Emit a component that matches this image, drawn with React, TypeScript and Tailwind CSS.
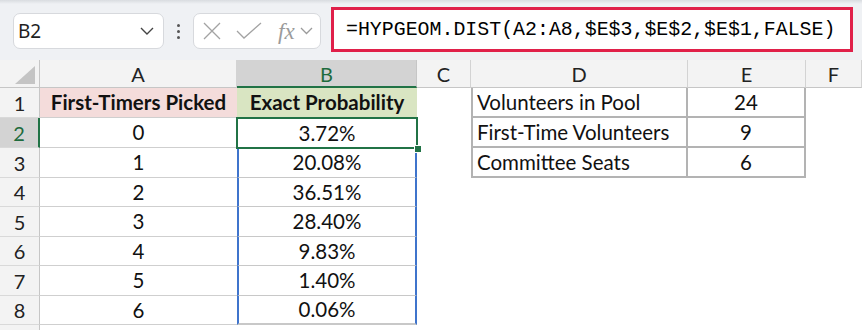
import React from "react";

const rows = [
  { n: 1, a: "First-Timers Picked", b: "Exact Probability", d: "Volunteers in Pool", e: "24", h: "h-[30px]" },
  { n: 2, a: "0", b: "3.72%", d: "First-Time Volunteers", e: "9", h: "h-[30px]" },
  { n: 3, a: "1", b: "20.08%", d: "Committee Seats", e: "6", h: "h-[30px]" },
  { n: 4, a: "2", b: "36.51%", d: "", e: "", h: "h-[29px]" },
  { n: 5, a: "3", b: "28.40%", d: "", e: "", h: "h-[30px]" },
  { n: 6, a: "4", b: "9.83%", d: "", e: "", h: "h-[29px]" },
  { n: 7, a: "5", b: "1.40%", d: "", e: "", h: "h-[30px]" },
  { n: 8, a: "6", b: "0.06%", d: "", e: "", h: "h-[29px]" },
];

function Toolbar() {
  return (
    <div className="relative h-[60px] bg-[#eff1f4] font-['Noto_Sans',sans-serif]">
      <div className="absolute left-0 right-0 top-0 h-[4px] bg-gradient-to-b from-[#d9dce0] to-[#eff1f4]" />
      <div className="flex items-start pt-[13px]">
        {/* name box */}
        <div className="ml-[13px] flex h-[36px] w-[151px] items-center justify-between rounded-[7px] border border-[#d7d9dd] bg-white pl-[4px] pr-[9px]">
          <span className="text-[19px] text-[#1f1f1f]">B2</span>
          <svg width="14" height="8" viewBox="0 0 14 8">
            <path d="M1 1l6 6 6-6" fill="none" stroke="#444" strokeWidth="1.4" />
          </svg>
        </div>
        {/* dots */}
        <div className="ml-[13px] mt-[11px] flex flex-col gap-[3px]">
          <span className="h-[3px] w-[3px] rounded-full bg-[#555]" />
          <span className="h-[3px] w-[3px] rounded-full bg-[#555]" />
          <span className="h-[3px] w-[3px] rounded-full bg-[#555]" />
        </div>
        {/* formula buttons */}
        <div className="ml-[13px] flex h-[36px] w-[128px] items-center rounded-[7px] border border-[#d7d9dd] bg-white pl-[9px]">
          <svg width="18" height="18" viewBox="0 0 18 18">
            <path d="M1 1l16 16M17 1L1 17" stroke="#a3a3a3" strokeWidth="1.3" />
          </svg>
          <svg className="ml-[15px]" width="26" height="18" viewBox="0 0 26 18">
            <path d="M1 9l7 7L25 1" fill="none" stroke="#a3a3a3" strokeWidth="1.3" />
          </svg>
          <span className="ml-[16px] font-['Liberation_Serif',serif] text-[23px] italic leading-none text-[#9b9b9b]">fx</span>
          <svg className="ml-[5px]" width="13" height="8" viewBox="0 0 13 8">
            <path d="M1 1l5.5 5.5L12 1" fill="none" stroke="#9b9b9b" strokeWidth="1.3" />
          </svg>
        </div>
        {/* formula bar */}
        <div className="-mt-[6px] ml-[10px] flex h-[45px] w-[522px] items-center border-[3px] border-[#e0204a] bg-white pl-[12px]">
          <span className="font-['Liberation_Mono',monospace] text-[19.9px] text-black">
            =HYPGEOM.DIST(A2:A8,$E$3,$E$2,$E$1,FALSE)
          </span>
        </div>
      </div>
    </div>
  );
}

function ColumnHeaders() {
  const cols = [
    { l: "A", w: "w-[197px]" },
    { l: "B", w: "w-[180px]" },
    { l: "C", w: "w-[54px]" },
    { l: "D", w: "w-[217px]" },
    { l: "E", w: "w-[118px]" },
    { l: "F", w: "w-[56px]" },
  ];
  return (
    <div className="flex h-[28px] bg-[#f3f3f3] text-[20px] text-[#222]">
      <div className="relative w-[40px] border-r border-b border-[#c6c6c6]">
        <svg className="absolute bottom-[3px] right-[4px]" width="20" height="18" viewBox="0 0 20 18">
          <polygon points="20,0 20,18 0,18" fill="#c4c4c4" />
        </svg>
      </div>
      {cols.map((c) =>
        c.l === "B" ? (
          <div
            key={c.l}
            className={`${c.w} flex items-center justify-center border-b-2 border-r border-b-[#217346] border-r-[#c6c6c6] bg-[#d3d3d3] pt-[2px] text-[#1e6b3d]`}
          >
            {c.l}
          </div>
        ) : (
          <div
            key={c.l}
            className={`${c.w} flex items-center justify-center border-r border-b border-[#d3d3d3] border-b-[#c6c6c6] pt-[1px]`}
          >
            {c.l}
          </div>
        )
      )}
    </div>
  );
}

function GridRow({ r }: { r: (typeof rows)[number] }) {
  const head = r.n === 1;
  const sel = r.n === 2;
  const inRange = r.n >= 3;
  const last = r.n === 8;
  const tbl = r.n <= 3;
  return (
    <div className={`flex ${r.h} text-[20.5px] text-[#111]`}>
      <div
        className={`flex w-[40px] items-center justify-center border-b border-[#d9d9d9] text-[20px] ${
          sel
            ? "border-r-2 border-r-[#217346] bg-[#d3d3d3] text-[#1e6b3d]"
            : "border-r border-r-[#c6c6c6] bg-[#f3f3f3] text-[#222]"
        }`}
      >
        {r.n}
      </div>
      <div
        className={`flex w-[197px] items-center justify-center border-b border-[#cfcfcf] ${
          head ? "bg-[#f4dcdb] font-bold" : "bg-white"
        }`}
      >
        {r.a}
      </div>
      <div
        className={`relative flex w-[180px] items-center justify-center ${
          head ? "border-b border-[#cfcfcf] bg-[#d9e5c2] font-bold" : "bg-white"
        } ${inRange ? "border-x-2 border-x-[#3f74cc] border-b border-b-[#c8c8c8]" : ""} ${
          last ? "border-b-2 border-b-[#3f74cc]" : ""
        }`}
      >
        {r.b}
        {sel && (
          <>
            <div className="absolute -left-[1px] -right-[1px] -top-[1px] -bottom-[1px] z-10 border-2 border-[#217346]" />
            <div className="absolute -bottom-[5px] -right-[5px] z-20 h-[8px] w-[8px] border border-white bg-[#217346]" />
          </>
        )}
      </div>
      <div className="w-[54px] bg-white" />
      <div
        className={`flex w-[217px] items-center pl-[4px] ${
          tbl ? "border-x-2 border-b-2 border-[#b3b3b3]" : ""
        }`}
      >
        {r.d}
      </div>
      <div
        className={`flex w-[118px] items-center justify-center ${
          tbl ? "border-r-2 border-b-2 border-[#b3b3b3]" : ""
        }`}
      >
        {r.e}
      </div>
      <div className="w-[56px]" />
    </div>
  );
}

export default function App() {
  return (
    <div className="h-[330px] w-[862px] overflow-hidden bg-white font-['Lato',sans-serif]">
      <Toolbar />
      <ColumnHeaders />
      {rows.map((r) => (
        <GridRow key={r.n} r={r} />
      ))}
      <div className="flex h-[29px]">
        <div className="w-[40px] border-r border-[#c6c6c6] bg-[#f3f3f3]" />
      </div>
    </div>
  );
}
